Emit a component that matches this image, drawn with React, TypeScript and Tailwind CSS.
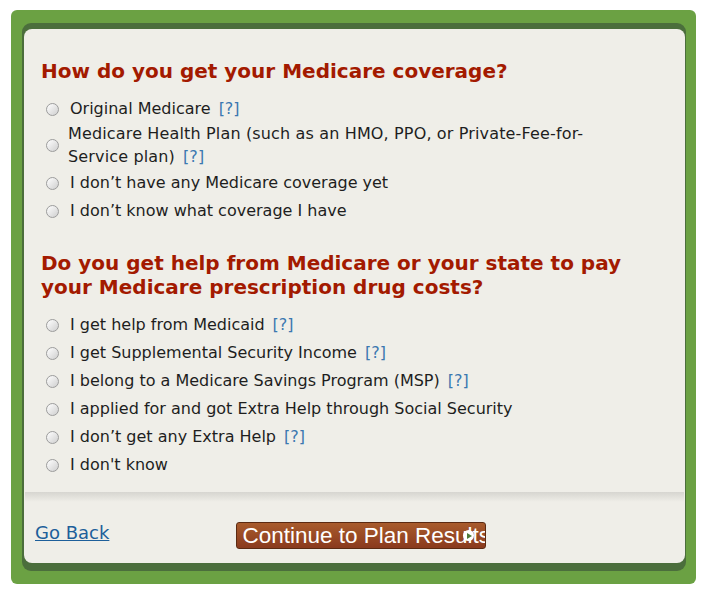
import { ReactNode } from 'react';

type Choice = { label: ReactNode; help?: boolean; wrap?: boolean };

const coverage: Choice[] = [
    { label: 'Original Medicare', help: true },
    { label: 'Medicare Health Plan (such as an HMO, PPO, or Private-Fee-for-Service plan)', help: true, wrap: true },
    { label: 'I don’t have any Medicare coverage yet' },
    { label: 'I don’t know what coverage I have' },
];

const helpOptions: Choice[] = [
    { label: 'I get help from Medicaid', help: true },
    { label: 'I get Supplemental Security Income', help: true },
    { label: 'I belong to a Medicare Savings Program (MSP)', help: true },
    { label: 'I applied for and got Extra Help through Social Security' },
    { label: 'I don’t get any Extra Help', help: true },
    { label: "I don't know" },
];

function Radio() {
    return (
        <span className="inline-block w-[13px] h-[13px] shrink-0 rounded-full border border-[#9c9c9c] bg-gradient-to-br from-[#ffffff] to-[#cfcfcf]" />
    );
}

function HelpLink() {
    return <span className="text-[#3b78b0] ml-[8px]">[?]</span>;
}

function ChoiceList({ items }: { items: Choice[] }) {
    return (
        <ul className="pl-[5px]">
            {items.map((item, i) => {
                if (item.wrap) {
                    // long label wraps under itself, radio sits beside it
                    return (
                        <li key={i} className="flex items-center -mt-px mb-px">
                            <Radio />
                            <span className="ml-[9px] leading-[23px] w-[535px] tracking-[0.15px]">
                                {item.label}
                                {item.help && <HelpLink />}
                            </span>
                        </li>
                    );
                }
                return (
                    <li key={i} className="flex items-center h-[28px]">
                        <Radio />
                        <span className="ml-[11px] leading-[28px]">
                            {item.label}
                            {item.help && <HelpLink />}
                        </span>
                    </li>
                );
            })}
        </ul>
    );
}

export default function App() {
    return (
        <div className="bg-white w-[713px] h-[595px] pt-[10px] pl-[11px]" style={{ fontFamily: '"DejaVu Sans", Verdana, sans-serif' }}>
            <div className="w-[685px] h-[574px] bg-[#6ba143] rounded-[6px] pt-[13px] pl-[11px]">
                <div className="w-[664px] bg-[#4b6e3c] rounded-[9px] pt-[6px] pb-[8px] pl-[2px] pr-px">
                    <div className="bg-[#efeee8] rounded-[8px] h-[534px] text-[16px] text-[#1e1e1e]">
                        <div className="pl-[17px] pr-[20px] pt-[30px]">
                            <h2 className="text-[#a31a00] font-bold text-[20px] leading-[24px]">
                                How do you get your Medicare coverage?
                            </h2>
                            <div className="mt-[12px]">
                                <ChoiceList items={coverage} />
                            </div>
                            <h2 className="text-[#a31a00] font-bold text-[20px] leading-[24px] mt-[26px]">
                                Do you get help from Medicare or your state to pay your Medicare prescription drug costs?
                            </h2>
                            <div className="mt-[12px]">
                                <ChoiceList items={helpOptions} />
                            </div>
                        </div>
                        <div className="mt-[13px] mx-px h-[10px] bg-gradient-to-b from-[#d6d5d0] to-[#efeee8]" />
                        <div className="flex items-start mt-[20px] pl-[11px]">
                            <a href="#" className="text-[#1d5f9a] underline text-[18px] leading-[22px]">Go Back</a>
                            <button
                                className="relative ml-[127px] w-[250px] h-[27px] overflow-hidden rounded-[3px] border border-[#5b2a12] bg-gradient-to-b from-[#a85b2c] to-[#8a3a1e] text-white text-[22.5px] leading-[25px] text-left pl-[5px] whitespace-nowrap"
                                style={{ fontFamily: '"Liberation Sans", Arial, sans-serif' }}
                            >
                                Continue to Plan Results
                                <span className="absolute left-[226px] top-[7px] w-[11px] h-[11px] rounded-full bg-white flex items-center justify-center">
                                    <span className="block w-0 h-0 border-y-[3px] border-y-transparent border-l-[5px] border-l-[#4d7a3a] ml-px" />
                                </span>
                            </button>
                        </div>
                    </div>
                </div>
            </div>
        </div>
    );
}
